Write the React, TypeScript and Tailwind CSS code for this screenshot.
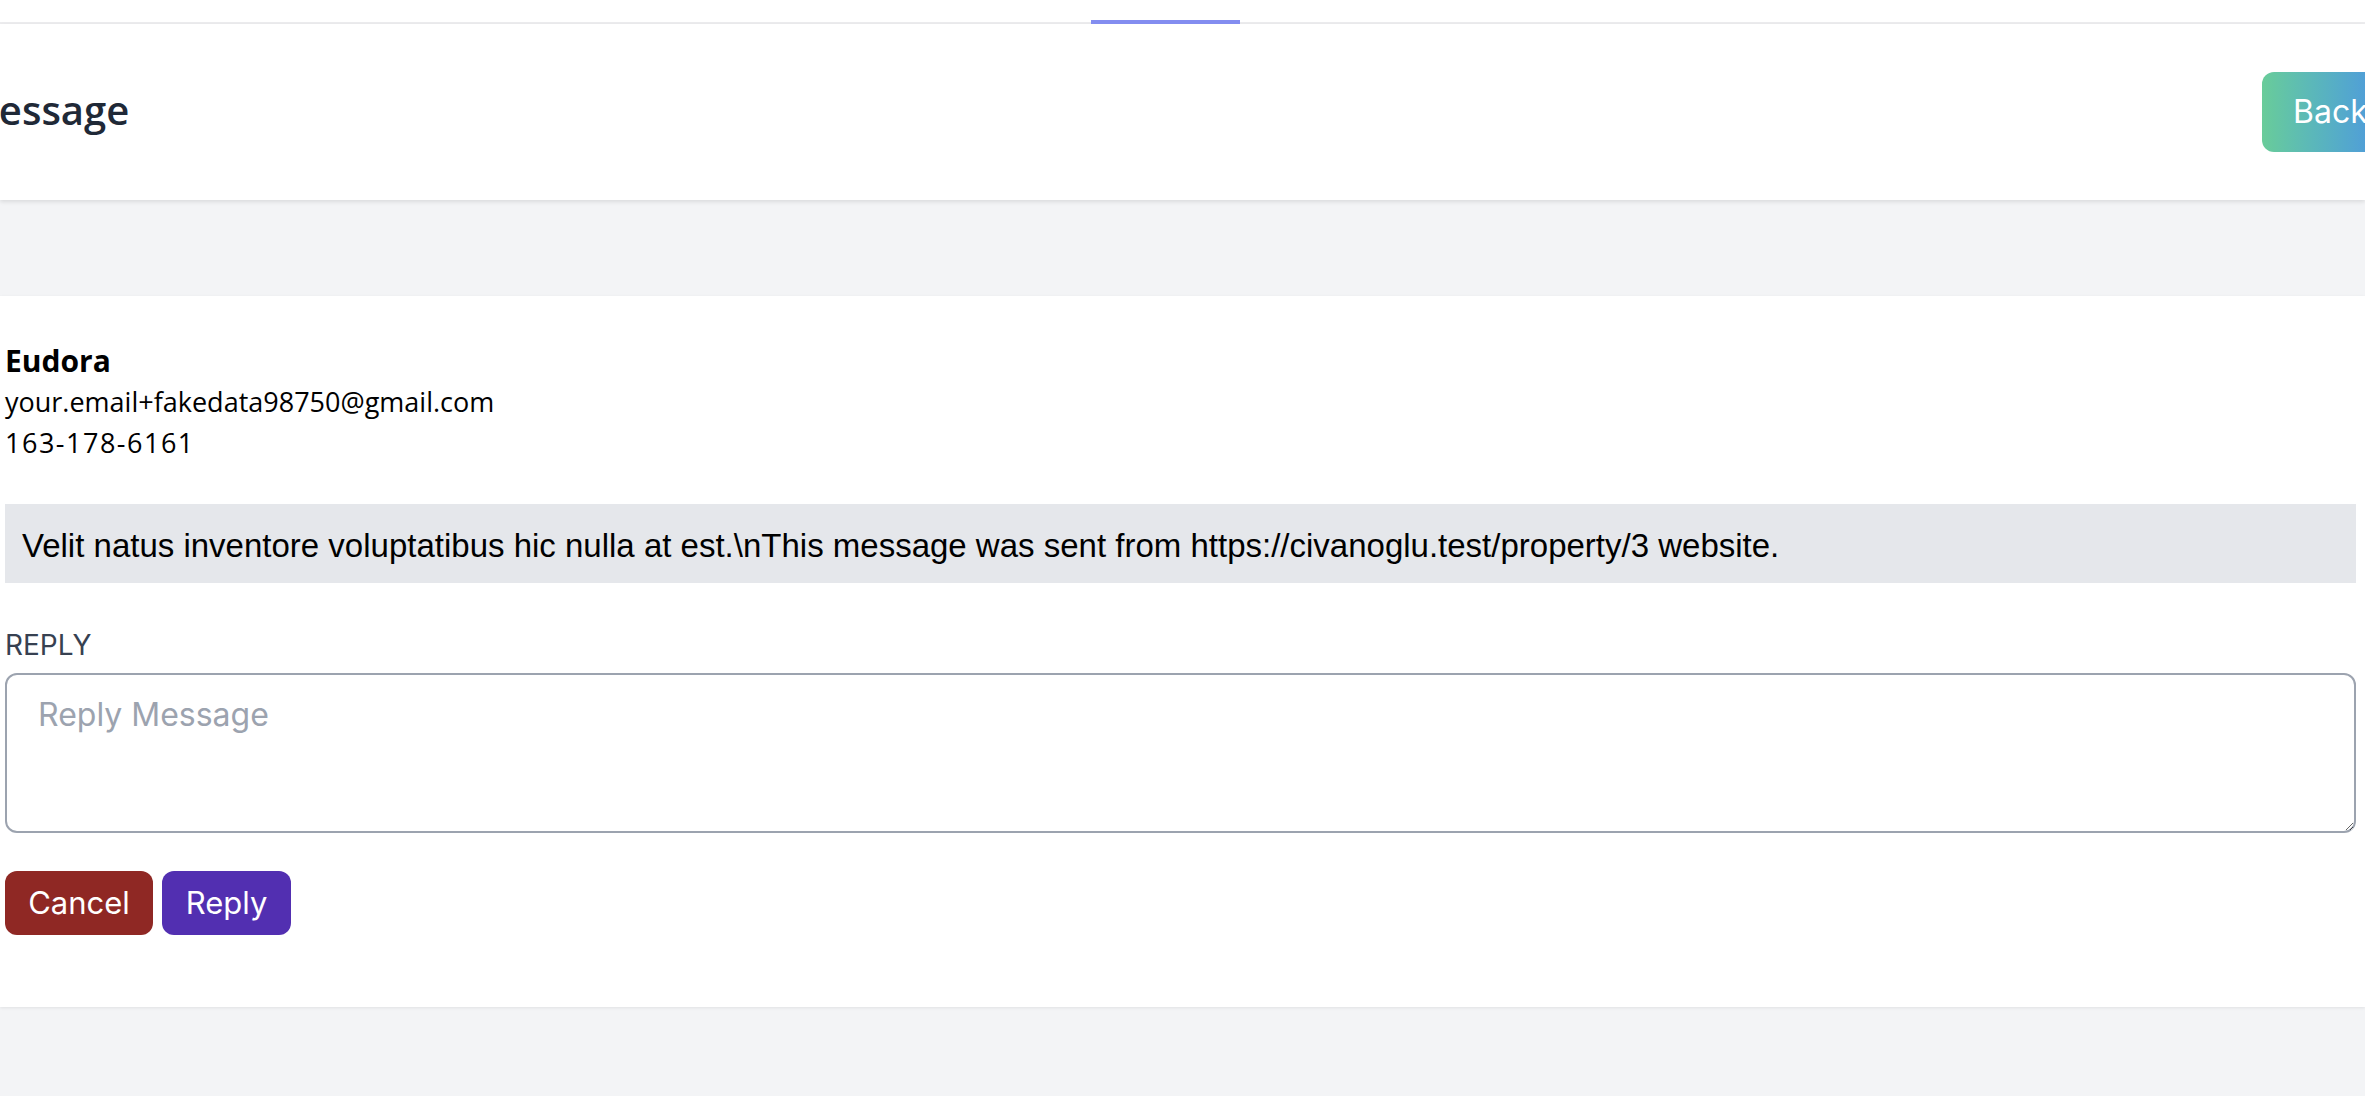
import React from 'react';

const message = {
  name: 'Eudora',
  email: 'your.email+fakedata98750@gmail.com',
  phone: '163-178-6161',
  body: 'Velit natus inventore voluptatibus hic nulla at est.\\nThis message was sent from https://civanoglu.test/property/3 website.',
};

const sans = "font-['Open_Sans',sans-serif]";
const ui = "font-['Inter',sans-serif]";

export default function App() {
  return (
    <div className="w-[2365px] h-[1096px] overflow-hidden bg-[#f3f4f6]">
      {/* top nav, only its bottom edge is in view */}
      <nav className="flex h-[24px] bg-white border-b-2 border-[#ececee]">
        <div className="ml-[1091px] w-[149px] -mb-[2px] border-b-4 border-[#838df0]" />
      </nav>

      <header className="flex h-[176px] items-center bg-white shadow-[0_2px_4px_rgba(0,0,0,0.10)]">
        <h2 className={`${sans} -ml-[38px] pb-[5px] text-[40px] font-semibold text-[#1f2937]`}>Message</h2>
        <button
          className={`${ui} ml-auto -mr-[33px] h-[80px] w-[136px] shrink-0 rounded-[12px] bg-gradient-to-r from-[#69cc99] to-[#4d8fe6] px-[31px] text-left text-[32px] text-white`}
        >
          Back
        </button>
      </header>

      <main className="pt-[96px]">
        <div className="bg-white shadow-[0_1px_3px_rgba(0,0,0,0.08)] pl-[5px] pr-[9px] pt-[44px] pb-[72px]">
          <div className={`${sans} text-black`}>
            <div className="text-[30px] font-bold leading-[41px]">{message.name}</div>
            <div className="text-[27px] leading-[41px]">{message.email}</div>
            <div className="text-[27px] tracking-[1.5px] leading-[41px]">{message.phone}</div>
          </div>

          <div className="mt-[41px] bg-[#e5e7eb] pl-[17px] pt-[18px] pb-[13px] font-['Liberation_Sans',Arial,sans-serif] text-[33px] leading-[48px] text-black">
            {message.body}
          </div>

          <label className={`${ui} mt-[42px] block text-[28px] leading-[40px] text-[#374151]`}>REPLY</label>
          <textarea
            placeholder="Reply Message"
            className={`${ui} mt-[8px] block h-[160px] w-full rounded-[12px] border-2 border-[#9ca3af] px-[31px] pt-[16px] text-[32px] leading-[48px] text-gray-900 placeholder:text-[#9ca3af] outline-none`}
          />

          <div className="mt-[38px] flex gap-[9px]">
            <button className={`${ui} h-[64px] w-[148px] rounded-[12px] bg-[#8f2824] text-[31px] text-white`}>Cancel</button>
            <button className={`${ui} h-[64px] w-[129px] rounded-[12px] bg-[#522fb1] text-[31px] text-white`}>Reply</button>
          </div>
        </div>
      </main>
    </div>
  );
}
